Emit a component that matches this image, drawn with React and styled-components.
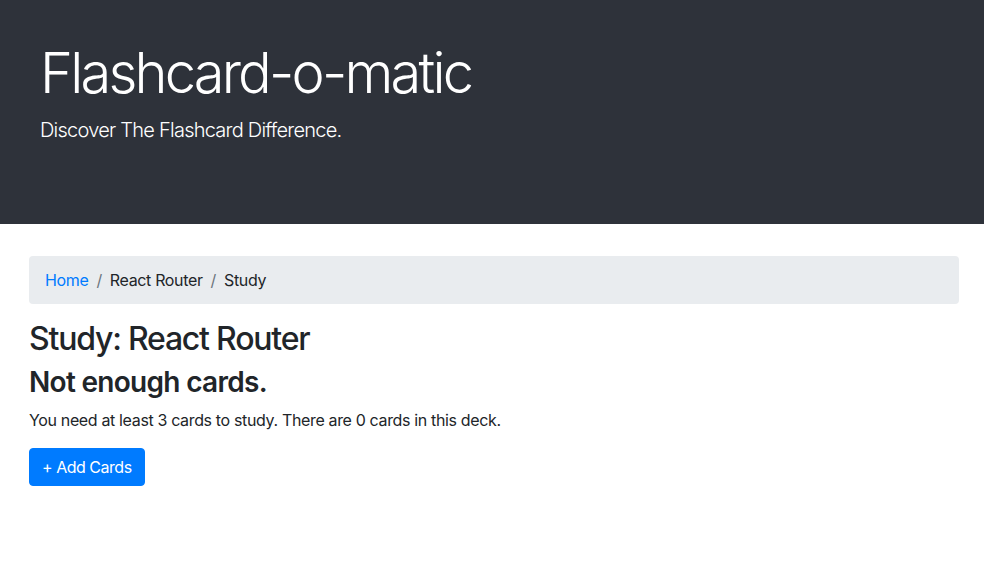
import styled, { createGlobalStyle } from "styled-components";

const GlobalStyle = createGlobalStyle`
  body {
    margin: 0;
    font-family: Inter, "Noto Sans", "Liberation Sans", sans-serif;
    font-size: 16px;
    line-height: 1.5;
    letter-spacing: -0.022em;
    color: #212529;
    background: #fff;
  }
`;

export default function App() {
  return (
    <>
      <GlobalStyle />
      <Header>
        <Title>Flashcard-o-matic</Title>
        <Lead>Discover The Flashcard Difference.</Lead>
      </Header>
      <Main>
        <Breadcrumb>
          <Crumb>
            <CrumbLink href="#">Home</CrumbLink>
          </Crumb>
          <Crumb>React Router</Crumb>
          <Crumb>Study</Crumb>
        </Breadcrumb>
        <PageTitle>Study: React Router</PageTitle>
        <SubTitle>Not enough cards.</SubTitle>
        <Text>You need at least 3 cards to study. There are 0 cards in this deck.</Text>
        <Button type="button">+ Add Cards</Button>
      </Main>
    </>
  );
}

const Header = styled.header`
  height: 224px;
  box-sizing: border-box;
  padding: 40px 40px;
  background: #2e323a;
  color: #fff;
`;

const Title = styled.h1`
  margin: 0 0 8px;
  font-size: 56px;
  font-weight: 300;
  line-height: 1.2;
  letter-spacing: -0.05em;
`;

const Lead = styled.p`
  margin: 0;
  font-size: 20px;
  font-weight: 300;
  line-height: 1.5;
  letter-spacing: -0.038em;
`;

const Main = styled.main`
  padding: 32px 25px 0 29px;
`;

const Breadcrumb = styled.ol`
  display: flex;
  list-style: none;
  margin: 0 0 16px;
  padding: 12px 16px;
  background: #e9ecef;
  border-radius: 4px;
`;

const Crumb = styled.li`
  & + & {
    padding-left: 8px;
  }
  & + &::before {
    content: "/";
    padding-right: 8px;
    color: #6c757d;
  }
`;

const CrumbLink = styled.a`
  color: #007bff;
  text-decoration: none;
`;

const PageTitle = styled.h2`
  margin: 2px 0 8px;
  font-size: 32px;
  font-weight: 500;
  line-height: 1.2;
  letter-spacing: -0.038em;
`;

const SubTitle = styled.h3`
  margin: 0 0 8px;
  font-size: 28px;
  font-weight: 600;
  line-height: 1.2;
  letter-spacing: -0.025em;
`;

const Text = styled.p`
  margin: 0 0 16px;
`;

const Button = styled.button`
  font: inherit;
  letter-spacing: -0.03em;
  color: #fff;
  background: #007bff;
  border: 1px solid #007bff;
  border-radius: 4px;
  padding: 6px 12px;
  line-height: 1.5;
  cursor: pointer;
`;
